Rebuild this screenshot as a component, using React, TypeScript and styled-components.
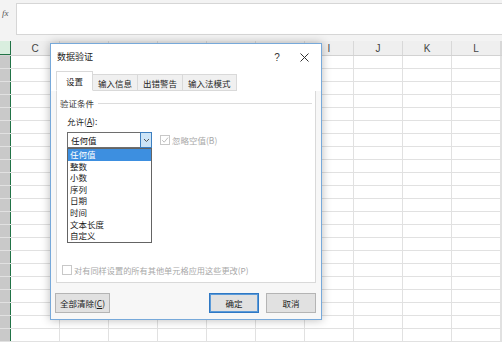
import React from "react";
import styled, { createGlobalStyle, css } from "styled-components";

const GlobalStyle = createGlobalStyle`
  html, body { margin: 0; padding: 0; background: #ffffff; }
  body {
    width: 502px; height: 357px; overflow: hidden;
    font-family: "Noto Sans CJK SC", "Noto Sans", sans-serif;
  }
  * { box-sizing: border-box; }
`;

const CJK = `"Noto Sans CJK SC", "Noto Sans", sans-serif`;

const Page = styled.div`
  position: relative;
  width: 502px;
  height: 357px;
  overflow: hidden;
  background: #ffffff;
`;

/* ---------- formula bar ---------- */
const FormulaBar = styled.div`
  display: flex;
  height: 42px;
  padding: 3px 0 6px 0;
  background: #f3f3f3;
  border-bottom: 1px solid #e2e2e2;
`;
const FxCell = styled.div`
  width: 16px;
  padding: 5px 0 0 2px;
  font-family: "Liberation Serif", serif;
  font-style: italic;
  font-size: 9px;
  color: #555;
  overflow: hidden;
`;
const FormulaInput = styled.div`
  flex: 1;
  background: #ffffff;
  border: 1px solid #d6d6d6;
  border-right: none;
`;

/* ---------- grid ---------- */
/* columns D–H sit behind the dialog, so their labels are not shown */
const columns = ["C", "", "", "", "", "", "I", "J", "K", "L"];
const GRID = "11px repeat(10, 49px) 1fr";

const HeaderRow = styled.div`
  display: grid;
  grid-template-columns: ${GRID};
  height: 15px;
  margin-top: -1px;
  background: #efefef;
  border-bottom: 1px solid #d2d2d2;
`;
const Corner = styled.div`
  background: #d9eedf;
  border-right: 1px solid #217346;
  border-bottom: 1px solid #217346;
`;
const HeaderCell = styled.div`
  border-right: 1px solid #d8d8d8;
  font-family: "Liberation Sans", Arial, sans-serif;
  font-size: 10px;
  padding-top: 1px;
  color: #444;
  display: flex;
  align-items: center;
  justify-content: center;
`;
const Row = styled.div`
  display: grid;
  grid-template-columns: ${GRID};
  height: 13px;
  border-bottom: 1px solid #e1e1e1;
`;
const RowStub = styled.div`
  background: #c9c9c9;
  border-right: 1px solid #217346;
`;
const Cell = styled.div`
  border-right: 1px solid #e1e1e1;
`;

/* ---------- dialog ---------- */
const Dialog = styled.div`
  position: absolute;
  left: 50px;
  top: 43px;
  width: 272px;
  height: 277px;
  display: flex;
  flex-direction: column;
  background: #f7f7f7;
  border: 1px solid #77a9da;
  box-shadow: 0 0 9px rgba(0, 0, 0, 0.28);
  font-family: ${CJK};
  font-size: 8.5px;
  color: #1a1a1a;
`;
const TitleBar = styled.div`
  display: flex;
  align-items: flex-start;
  height: 27px;
  padding: 7px 0 0 6px;
  background: #ffffff;
`;
const Title = styled.div`
  flex: 1;
  line-height: 12px;
  font-size: 9px;
  color: #222;
`;
const TitleButton = styled.div<{ $w: number }>`
  width: ${(p) => p.$w}px;
  height: 12px;
  font-family: "Liberation Sans", Arial, sans-serif;
  font-size: 10px;
  color: #333;
  display: flex;
  justify-content: center;
  align-items: center;
`;
const CloseButton = styled(TitleButton)`
  margin: 0 8px 0 12px;
`;
const Tabs = styled.div`
  display: flex;
  align-items: flex-end;
  height: 20px;
  padding-left: 5px;
  background: #ffffff;
  position: relative;
  z-index: 1;
  margin-bottom: -1px;
`;
const Tab = styled.div<{ $active?: boolean }>`
  height: 17px;
  padding: 0 5px;
  line-height: 16px;
  background: #f0f0f0;
  border: 1px solid #d9d9d9;
  border-left: none;
  border-bottom: 1px solid #d9d9d9;
  color: #222;
  ${(p) =>
    p.$active &&
    css`
      height: 20px;
      padding: 0 9px;
      line-height: 19px;
      background: #ffffff;
      border-left: 1px solid #d9d9d9;
      border-bottom: 1px solid #ffffff;
    `}
`;
const Panel = styled.div`
  margin: 0 5px;
  height: 193px;
  background: #ffffff;
  border: 1px solid #d9d9d9;
  display: flex;
  flex-direction: column;
`;
const Legend = styled.div`
  display: flex;
  align-items: center;
  margin-top: 6px;
  padding: 0 3px;
  line-height: 12px;
  color: #333;
`;
const Rule = styled.div`
  flex: 1;
  height: 1px;
  margin-left: 4px;
  background: #dcdcdc;
`;
const FieldLabel = styled.div`
  margin: 6px 0 0 10px;
  line-height: 12px;
  color: #222;
`;
const FieldRow = styled.div`
  display: flex;
  align-items: flex-start;
  margin: 5px 0 0 10px;
`;
const SelectWrap = styled.div`
  position: relative;
  width: 85px;
`;
const Select = styled.div`
  display: flex;
  height: 16px;
  border: 1px solid #6e6e6e;
  background: #ffffff;
`;
const SelectValue = styled.div`
  flex: 1;
  padding-left: 3px;
  line-height: 14px;
  color: #111;
`;
const ArrowButton = styled.div`
  width: 12px;
  margin: -1px -1px -1px 0;
  background: #cce4f7;
  border: 1px solid #3d7fc0;
  display: flex;
  align-items: center;
  justify-content: center;
`;
const Listbox = styled.div`
  position: absolute;
  left: 0;
  top: 16px;
  width: 85px;
  height: 95px;
  background: #ffffff;
  border: 1px solid #646464;
  z-index: 2;
`;
const Option = styled.div<{ $selected?: boolean }>`
  height: 11.6px;
  line-height: 11.6px;
  padding-left: 2px;
  color: ${(p) => (p.$selected ? "#ffffff" : "#1a1a1a")};
  background: ${(p) => (p.$selected ? "#3d8fe0" : "transparent")};
`;
const CheckLabel = styled.div<{ $disabled?: boolean }>`
  display: flex;
  align-items: center;
  gap: 2px;
  line-height: 12px;
  color: ${(p) => (p.$disabled ? "#a8a8a8" : "#222")};
`;
const CheckBox = styled.div`
  width: 10px;
  height: 10px;
  border: 1px solid #c8c8c8;
  background: #ffffff;
  display: flex;
  align-items: center;
  justify-content: center;
`;
const IgnoreCheck = styled(CheckLabel)`
  margin: 2px 0 0 8px;
`;
const ApplyCheck = styled(CheckLabel)`
  margin: auto 0 6px 5px;
  font-size: 8.2px;
`;
const Footer = styled.div`
  display: flex;
  gap: 7px;
  padding: 10px 5px 0 4px;
`;
const Button = styled.div<{ $w: number; $primary?: boolean }>`
  width: ${(p) => p.$w}px;
  height: 20px;
  line-height: 18px;
  text-align: center;
  background: #e1e1e1;
  border: 1px solid ${(p) => (p.$primary ? "#2f78c4" : "#b4b4b4")};
  ${(p) => p.$primary && css`box-shadow: inset 0 0 0 1px #5b9ad8;`}
  color: #1a1a1a;
`;
const Spacer = styled.div`
  flex: 1;
`;

const Chevron = () => (
  <svg width="7" height="5" viewBox="0 0 7 5">
    <path d="M1 1 L3.5 3.5 L6 1" fill="none" stroke="#555" strokeWidth="1" />
  </svg>
);
const Tick = () => (
  <svg width="8" height="8" viewBox="0 0 8 8">
    <path d="M1.2 4.2 L3.2 6.2 L7 1.6" fill="none" stroke="#bdbdbd" strokeWidth="1" />
  </svg>
);
const CloseIcon = () => (
  <svg width="9" height="9" viewBox="0 0 9 9">
    <path d="M0.5 0.5 L8.5 8.5 M8.5 0.5 L0.5 8.5" stroke="#333" strokeWidth="1" />
  </svg>
);

const tabs = ["设置", "输入信息", "出错警告", "输入法模式"];
const options = ["任何值", "整数", "小数", "序列", "日期", "时间", "文本长度", "自定义"];

export default function App() {
  const rows = Array.from({ length: 22 });
  return (
    <Page>
      <GlobalStyle />
      <FormulaBar>
        <FxCell>fx</FxCell>
        <FormulaInput />
      </FormulaBar>
      <HeaderRow>
        <Corner />
        {columns.map((c, i) => (
          <HeaderCell key={i}>{c}</HeaderCell>
        ))}
        <HeaderCell />
      </HeaderRow>
      {rows.map((_, r) => (
        <Row key={r}>
          <RowStub />
          {columns.map((_c, i) => (
            <Cell key={i} />
          ))}
          <Cell />
        </Row>
      ))}

      <Dialog>
        <TitleBar>
          <Title>数据验证</Title>
          <TitleButton $w={12}>?</TitleButton>
          <CloseButton $w={18}>
            <CloseIcon />
          </CloseButton>
        </TitleBar>
        <Tabs>
          {tabs.map((t, i) => (
            <Tab key={t} $active={i === 0}>
              {t}
            </Tab>
          ))}
        </Tabs>
        <Panel>
          <Legend>
            <span>验证条件</span>
            <Rule />
          </Legend>
          <FieldLabel>
            允许(<u>A</u>):
          </FieldLabel>
          <FieldRow>
            <SelectWrap>
              <Select>
                <SelectValue>任何值</SelectValue>
                <ArrowButton>
                  <Chevron />
                </ArrowButton>
              </Select>
              <Listbox>
                {options.map((o, i) => (
                  <Option key={o} $selected={i === 0}>
                    {o}
                  </Option>
                ))}
              </Listbox>
            </SelectWrap>
            <IgnoreCheck $disabled>
              <CheckBox>
                <Tick />
              </CheckBox>
              忽略空值(B)
            </IgnoreCheck>
          </FieldRow>
          <ApplyCheck $disabled>
            <CheckBox />
            对有同样设置的所有其他单元格应用这些更改(P)
          </ApplyCheck>
        </Panel>
        <Footer>
          <Button $w={55}>
            全部清除(<u>C</u>)
          </Button>
          <Spacer />
          <Button $w={50} $primary>
            确定
          </Button>
          <Button $w={50}>取消</Button>
        </Footer>
      </Dialog>
    </Page>
  );
}
